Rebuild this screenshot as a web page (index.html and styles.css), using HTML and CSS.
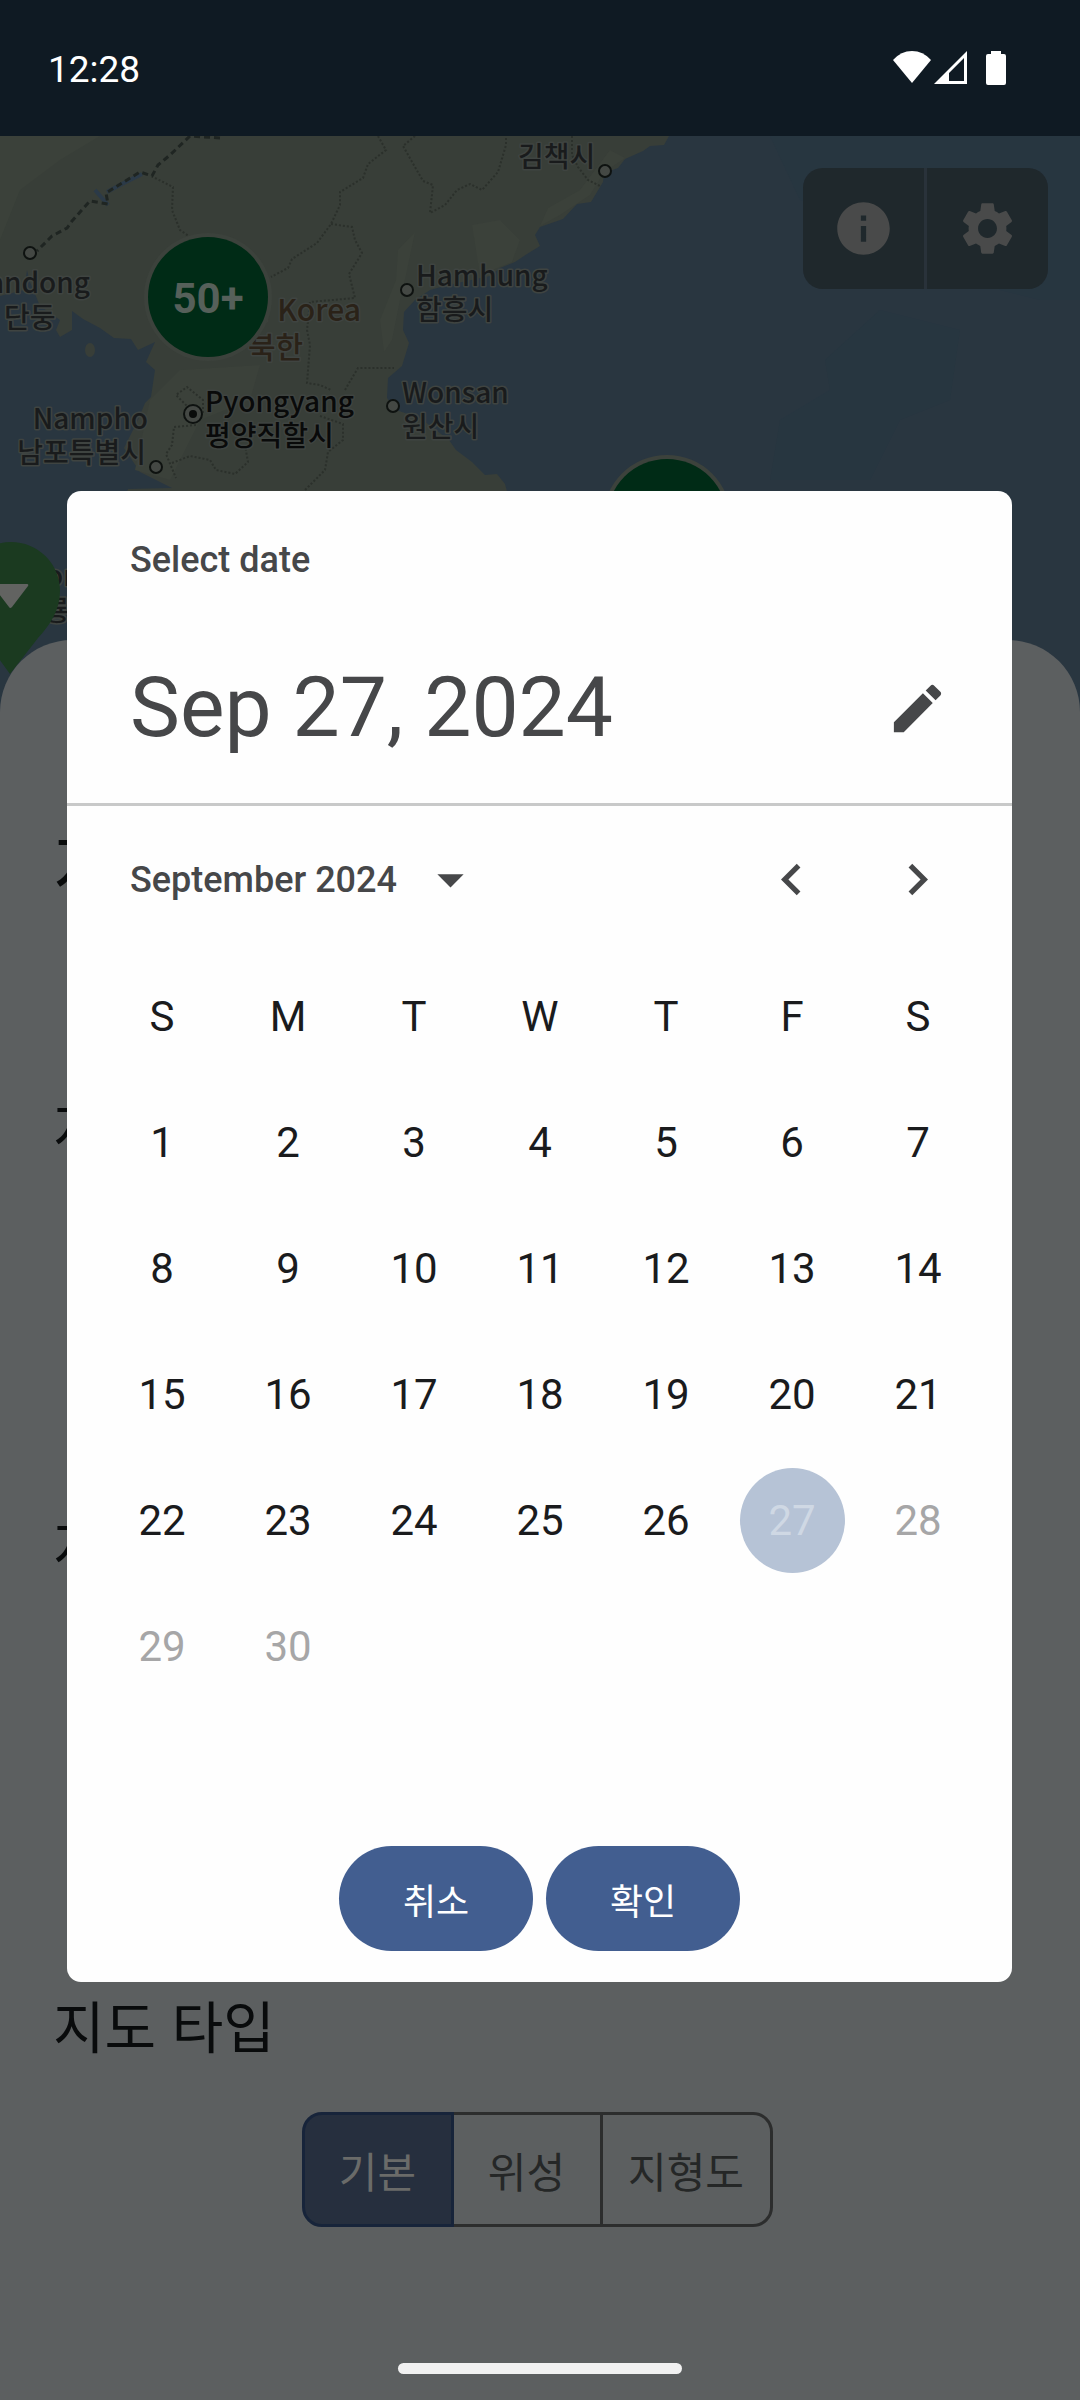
FILE: index.html
```html
<!DOCTYPE html>
<html lang="ko">
<head>
<meta charset="utf-8">
<meta name="viewport" content="width=device-width, initial-scale=1">
<title>지도 타입</title>
<link rel="stylesheet" href="styles.css">
</head>
<body>
<div class="screen">
  <header class="status-bar">
    <time class="clock">12:28</time>
    <svg class="status-icons" width="113" height="34" viewBox="893 51 113 34" aria-hidden="true">
      <path d="M893 60Q901 51 912 51T931 60L912 83Z"/>
      <path fill-rule="evenodd" d="M934 84L967 51V84ZM949 81H964V58L949 73Z"/>
      <path d="M991 51H1001V54H1004Q1006 54 1006 56V83Q1006 85 1004 85H988Q986 85 986 83V56Q986 54 988 54H991Z"/>
    </svg>
  </header>

  <section class="map" aria-label="지도">
    <svg class="map-canvas" viewBox="0 136 1080 600" preserveAspectRatio="xMidYMin slice">
      <rect class="sea" x="0" y="136" width="1080" height="600"/>
      <path class="sea-deep" d="M770 136H1080V300H1040L1000 290L960 240L800 200ZM880 310L960 330L950 400L900 420L870 480H770L780 420L830 390L825 360Z"/>
      <path class="land" d="M0 136H669L664 145L650 146L643 151L625 159L618 168L604 173L603 182L591 202L577 204L563 219L540 227L535 235L540 246L527 254L515 262L500 268L490 276L448 285L430 290L415 300L404 312L403 330L409 343L402 366L388 378L387 398L396 410L420 418L449 440L456 450L472 462L485 475L497 474L505 484L512 510H120L128 489L172 488L140 472L124 448L138 420L145 403L151 397L155 370L146 362L155 342L138 350L131 339L114 338L100 328L83 319L72 311L72 330L60 337L56 330L60 320L40 306L30 282L27 270L24 290L0 296Z"/>
      <path class="land-light" d="M0 136H100L60 160L20 190L0 240ZM415 232L406 275L400 300L392 340L384 352L380 320L396 280L398 250ZM472 225L500 220L520 240L512 262L480 275ZM150 400L180 370L260 365L250 400L200 420L170 480L135 470ZM540 226L560 215L590 195L604 172L625 158L610 150L580 190L548 208Z"/>
      <ellipse class="land" cx="90" cy="350" rx="5" ry="7"/>
      <path class="river" d="M95 190L108 205M107 192L122 184L142 174"/>
      <path class="border" d="M220 138L190 136L170 155L158 165L152 176L140 172L106 193L108 204L90 201L72 221L67 228L52 236L37 251"/>
      <path class="province" d="M155 178L173 187L172 210L180 230L190 237M378 136L386 150L368 164L363 178L340 192L340 205L331 224L317 243L292 259L288 268L271 277M331 224L352 227L355 240L362 253L349 274L355 298L310 302L307 330L310 345L307 383L320 385L331 390M345 390L352 378L358 368L394 368M415 136L403 146L423 181L433 185L430 213L445 205L457 190L470 184L482 190L498 172L506 145V136M572 136V155L578 167L588 180L600 186M195 414L176 395L187 387L203 400V414M196 425L174 427L172 445L166 454L176 478M172 463L190 456L210 460L216 470L235 474L248 462L245 445M320 416L343 424L343 440L328 452L325 470L305 490"/>
      <g class="towns">
        <circle cx="30" cy="253" r="6"/><circle cx="156" cy="467" r="6"/><circle cx="407" cy="290" r="6"/>
        <circle cx="393" cy="406" r="6"/><circle cx="605" cy="171" r="6"/><circle cx="193" cy="414" r="9"/>
      </g>
      <circle class="capital" cx="193" cy="414" r="4"/>
      <g class="label">
        <text x="518" y="167">김책시</text>
        <text x="90" y="293" text-anchor="end">Dandong</text><text x="4" y="328">단둥</text>
        <text x="416" y="286">Hamhung</text><text x="416" y="320">함흥시</text>
        <text x="402" y="403">Wonsan</text><text x="402" y="437">원산시</text>
        <text x="148" y="429" text-anchor="end">Nampho</text><text x="146" y="463" text-anchor="end">남포특별시</text>
        <text x="46" y="586">on</text><text x="44" y="621">룡</text>
      </g>
      <g class="label label-capital">
        <text x="205" y="412">Pyongyang</text><text x="205" y="446">평양직할시</text>
      </g>
      <g class="label label-country">
        <text x="361" y="321" text-anchor="end">North Korea</text><text x="248" y="358">북한</text>
      </g>
      <circle class="halo" cx="208" cy="297" r="64"/><circle class="cluster" cx="208" cy="297" r="60"/>
      <text class="cluster-count" x="208" y="313" text-anchor="middle">50+</text>
      <circle class="halo" cx="667" cy="519" r="64"/><circle class="cluster" cx="667" cy="519" r="60"/>
      <path class="pin" d="M11 542A49 49 0 0 1 60 591C60 610 50 625 38 638L10 674L-16 638C-28 625 -38 610 -38 591A49 49 0 0 1 11 542Z"/>
      <path class="pin-mark" d="M-8 585Q-8 584 -7 584H27Q29 584 28 586L12 607Q10 609 9 607Z"/>
    </svg>
    <div class="map-tools">
      <button type="button" aria-label="정보"><svg viewBox="0 0 24 24"><path d="M12 2C6.48 2 2 6.48 2 12s4.48 10 10 10 10-4.480 10-10S17.520 2 12 2zm1 15h-2v-6h2v6zm0-8h-2V7h2v2z"/></svg></button>
      <button type="button" aria-label="설정"><svg viewBox="0 0 24 24"><path d="M19.140 12.940c.040-.3.060-.61.060-.94 0-.32-.020-.64-.070-.94l2.030-1.580c.180-.140.230-.410.120-.610l-1.920-3.320c-.120-.220-.370-.290-.590-.220l-2.390.96c-.5-.380-1.030-.7-1.620-.94l-.360-2.540c-.040-.240-.240-.410-.480-.410h-3.840c-.240 0-.430.170-.470.410l-.360 2.540c-.590.240-1.130.570-1.620.94l-2.390-.96c-.220-.080-.470 0-.590.220L2.740 8.870c-.120.210-.080.470.120.610l2.030 1.580c-.050.3-.090.630-.090.94s.020.640.070.94l-2.030 1.580c-.180.140-.230.410-.120.610l1.920 3.320c.120.220.370.290.590.220l2.390-.96c.5.380 1.030.7 1.620.94l.360 2.540c.050.240.240.410.480.410h3.840c.240 0 .440-.170.470-.410l.360-2.540c.590-.240 1.130-.560 1.620-.94l2.390.96c.220.080.470 0 .590-.220l1.920-3.320c.120-.220.070-.470-.120-.610l-2.010-1.580zM12 15.600c-1.980 0-3.600-1.620-3.600-3.600s1.620-3.600 3.600-3.600 3.600 1.620 3.600 3.600-1.620 3.600-3.600 3.600z"/></svg></button>
    </div>
  </section>

  <main class="sheet">
    <h1>지</h1>
    <section class="group group-short"><h2>지</h2></section>
    <section class="group group-tall"><h2>지</h2></section>
    <section class="group">
      <h2 id="map-type">지도 타입</h2>
      <div class="segments" role="radiogroup" aria-labelledby="map-type">
        <label class="segment"><input type="radio" name="type" checked><span>기본</span></label>
        <label class="segment"><input type="radio" name="type"><span>위성</span></label>
        <label class="segment segment-wide"><input type="radio" name="type"><span>지형도</span></label>
      </div>
    </section>
    <div class="gesture-bar"></div>
  </main>

  <div class="overlay">
    <div class="dialog" role="dialog" aria-modal="true" aria-labelledby="picker-title">
      <div class="picker-head">
        <p class="picker-label" id="picker-title">Select date</p>
        <div class="picker-row">
          <p class="picker-date">Sep 27, 2024</p>
          <button type="button" class="icon-button" aria-label="Edit"><svg viewBox="0 0 24 24"><path d="M3 17.250V21h3.750L17.810 9.940l-3.750-3.750L3 17.250zM20.710 7.040c.390-.390.390-1.020 0-1.410l-2.340-2.340c-.390-.390-1.020-.390-1.410 0l-1.830 1.830 3.750 3.750 1.830-1.830z"/></svg></button>
        </div>
      </div>
      <div class="month-row">
        <button type="button" class="month-button" aria-haspopup="listbox">September 2024<svg viewBox="0 0 24 24"><path d="M7 10l5 5 5-5z"/></svg></button>
        <button type="button" class="icon-button" aria-label="Previous month"><svg viewBox="0 0 24 24"><path d="M15.410 7.410L14 6l-6 6 6 6 1.410-1.410L10.830 12z"/></svg></button>
        <button type="button" class="icon-button" aria-label="Next month"><svg viewBox="0 0 24 24"><path d="M10 6L8.590 7.410 13.170 12l-4.580 4.590L10 18l6-6z"/></svg></button>
      </div>
      <div class="month">
        <table class="calendar">
          <thead><tr><th>S</th><th>M</th><th>T</th><th>W</th><th>T</th><th>F</th><th>S</th></tr></thead>
          <tbody>
            <tr><td><button>1</button></td><td><button>2</button></td><td><button>3</button></td><td><button>4</button></td><td><button>5</button></td><td><button>6</button></td><td><button>7</button></td></tr>
            <tr><td><button>8</button></td><td><button>9</button></td><td><button>10</button></td><td><button>11</button></td><td><button>12</button></td><td><button>13</button></td><td><button>14</button></td></tr>
            <tr><td><button>15</button></td><td><button>16</button></td><td><button>17</button></td><td><button>18</button></td><td><button>19</button></td><td><button>20</button></td><td><button>21</button></td></tr>
            <tr><td><button>22</button></td><td><button>23</button></td><td><button>24</button></td><td><button>25</button></td><td><button>26</button></td><td><button class="selected" disabled>27</button></td><td><button disabled>28</button></td></tr>
            <tr><td><button disabled>29</button></td><td><button disabled>30</button></td><td></td><td></td><td></td><td></td><td></td></tr>
          </tbody>
        </table>
      </div>
      <div class="actions">
        <button type="button">취소</button>
        <button type="button">확인</button>
      </div>
    </div>
  </div>
</div>
</body>
</html>
```
FILE: styles.css
```css
* { box-sizing: border-box; }

body {
  margin: 0;
  background: #5c5f60;
  font-family: Roboto, "Noto Sans CJK KR", sans-serif;
}

h1, h2, p { margin: 0; font-weight: 400; }

button {
  border: 0;
  padding: 0;
  background: none;
  color: inherit;
  font: inherit;
}

svg { display: block; fill: currentColor; }

.screen {
  position: relative;
  display: flex;
  flex-direction: column;
  min-height: 100vh;
}

/* Status bar */
.status-bar {
  display: flex;
  align-items: flex-end;
  justify-content: space-between;
  height: 136px;
  padding: 0 74px 51px 48px;
  background: #0f1a23;
  color: #fff;
}

.clock { font-size: 37px; line-height: 30px; }

/* Map */
.map { position: relative; height: 600px; }
.map-canvas { width: 100%; height: 100%; }
.sea { fill: #293640; }
.sea-deep { fill: #273640; }
.land { fill: #383e38; }
.land-light { fill: #3b413a; }
.river { fill: none; stroke: #2b3a48; stroke-width: 4; }
.border { fill: none; stroke: #1f2522; stroke-width: 3; stroke-dasharray: 6 4; }
.province { fill: none; stroke: #2b302b; stroke-width: 2; stroke-dasharray: 2 2; }
.towns { fill: #444844; stroke: #0e1210; stroke-width: 2; }
.capital { fill: #0a0c0b; }

.label {
  fill: #191b1c;
  font-family: "Noto Sans CJK KR", sans-serif;
  font-size: 28px;
  font-weight: 500;
  paint-order: stroke;
  stroke: #3f4441;
  stroke-width: 3;
  stroke-linejoin: round;
}

.label-capital { fill: #090a0a; }
.label-country { fill: #2a2218; font-size: 30px; }
.halo { fill: #3c423c; }
.cluster { fill: #002b16; }
.cluster-count { fill: #56605a; font-size: 42px; font-weight: 700; }
.pin { fill: #1b3a20; }
.pin-mark { fill: #626361; }

.map-tools {
  position: absolute;
  top: 32px;
  right: 32px;
  display: flex;
  gap: 3px;
  overflow: hidden;
  border-radius: 20px;
  background: #29323a;
  color: #494a4a;
}

.map-tools button {
  display: grid;
  place-items: center;
  width: 121px;
  height: 121px;
  background: #1f282c;
}

.map-tools svg,
.icon-button svg,
.month-button svg { width: 63px; height: 63px; }

/* Bottom sheet */
.sheet {
  position: relative;
  display: flex;
  flex: 1;
  flex-direction: column;
  margin-top: -96px;
  padding: 174px 53px 26px;
  border-radius: 72px 72px 0 0;
  background: #5c5f60;
  color: #090b0c;
  font-family: "Noto Sans CJK KR", sans-serif;
}

.sheet h1 { margin-bottom: 175px; font-size: 72px; line-height: 96px; }
.sheet h2 { font-size: 56px; line-height: 80px; }
.group-short { min-height: 418px; }
.group-tall { min-height: 481px; }

.segments { display: flex; justify-content: center; margin-top: 48px; }
.segment { display: block; margin-left: -3px; }
.segment:first-child { margin-left: -6px; }
.segment input { position: absolute; opacity: 0; }

.segment span {
  display: block;
  width: 152px;
  border: 3px solid #2c2d2d;
  color: #252727;
  font-size: 42px;
  line-height: 109px;
  text-align: center;
}

.segment-wide span { width: 173px; border-radius: 0 20px 20px 0; }
.segment:first-child span { border-radius: 20px 0 0 20px; }

.segment input:checked + span {
  position: relative;
  border-color: #17243a;
  background: #262f3e;
  color: #6a6b69;
}

.gesture-bar {
  align-self: center;
  width: 284px;
  height: 11px;
  margin-top: auto;
  border-radius: 6px;
  background: #f1f1f1;
}

/* Date picker dialog */
.overlay {
  position: absolute;
  inset: 0;
  display: flex;
  align-items: center;
  padding: 136px 68px 63px 67px;
}

.dialog {
  width: 100%;
  border-radius: 14px;
  background: #fefefe;
  color: #464749;
}

.picker-head { padding: 44px 32px 45px 63px; border-bottom: 3px solid #c8c9c9; }
.picker-label { font-size: 36px; font-weight: 500; line-height: 50px; }
.picker-row { display: flex; justify-content: space-between; margin-top: 73px; }
.picker-date { font-size: 84px; line-height: 100px; }

.icon-button { display: grid; place-items: center; width: 126px; }

.month-row { display: flex; height: 147px; padding: 0 32px 0 63px; }

.month-button {
  display: flex;
  align-items: center;
  gap: 22px;
  margin-right: auto;
  font-size: 36px;
  font-weight: 500;
}

.month { min-height: 882px; padding: 0 31px 0 32px; }

.calendar {
  width: 100%;
  border-collapse: collapse;
  table-layout: fixed;
  color: #1a1b1d;
  font-size: 42px;
}

.calendar th,
.calendar td { height: 126px; padding: 0; font-weight: 400; text-align: center; }

.calendar button { display: block; width: 105px; height: 105px; margin: 0 auto; border-radius: 50%; }
.calendar button:disabled { color: #a6a6a7; }
.calendar .selected:disabled { background: #b6c3d6; color: #cfd8e4; }

.actions { display: flex; justify-content: center; gap: 13px; padding: 11px 0 31px; }

.actions button {
  width: 194px;
  height: 105px;
  border-radius: 53px;
  background: #425e90;
  color: #fff;
  font-family: "Noto Sans CJK KR", sans-serif;
  font-size: 36px;
  font-weight: 400;
}
```
